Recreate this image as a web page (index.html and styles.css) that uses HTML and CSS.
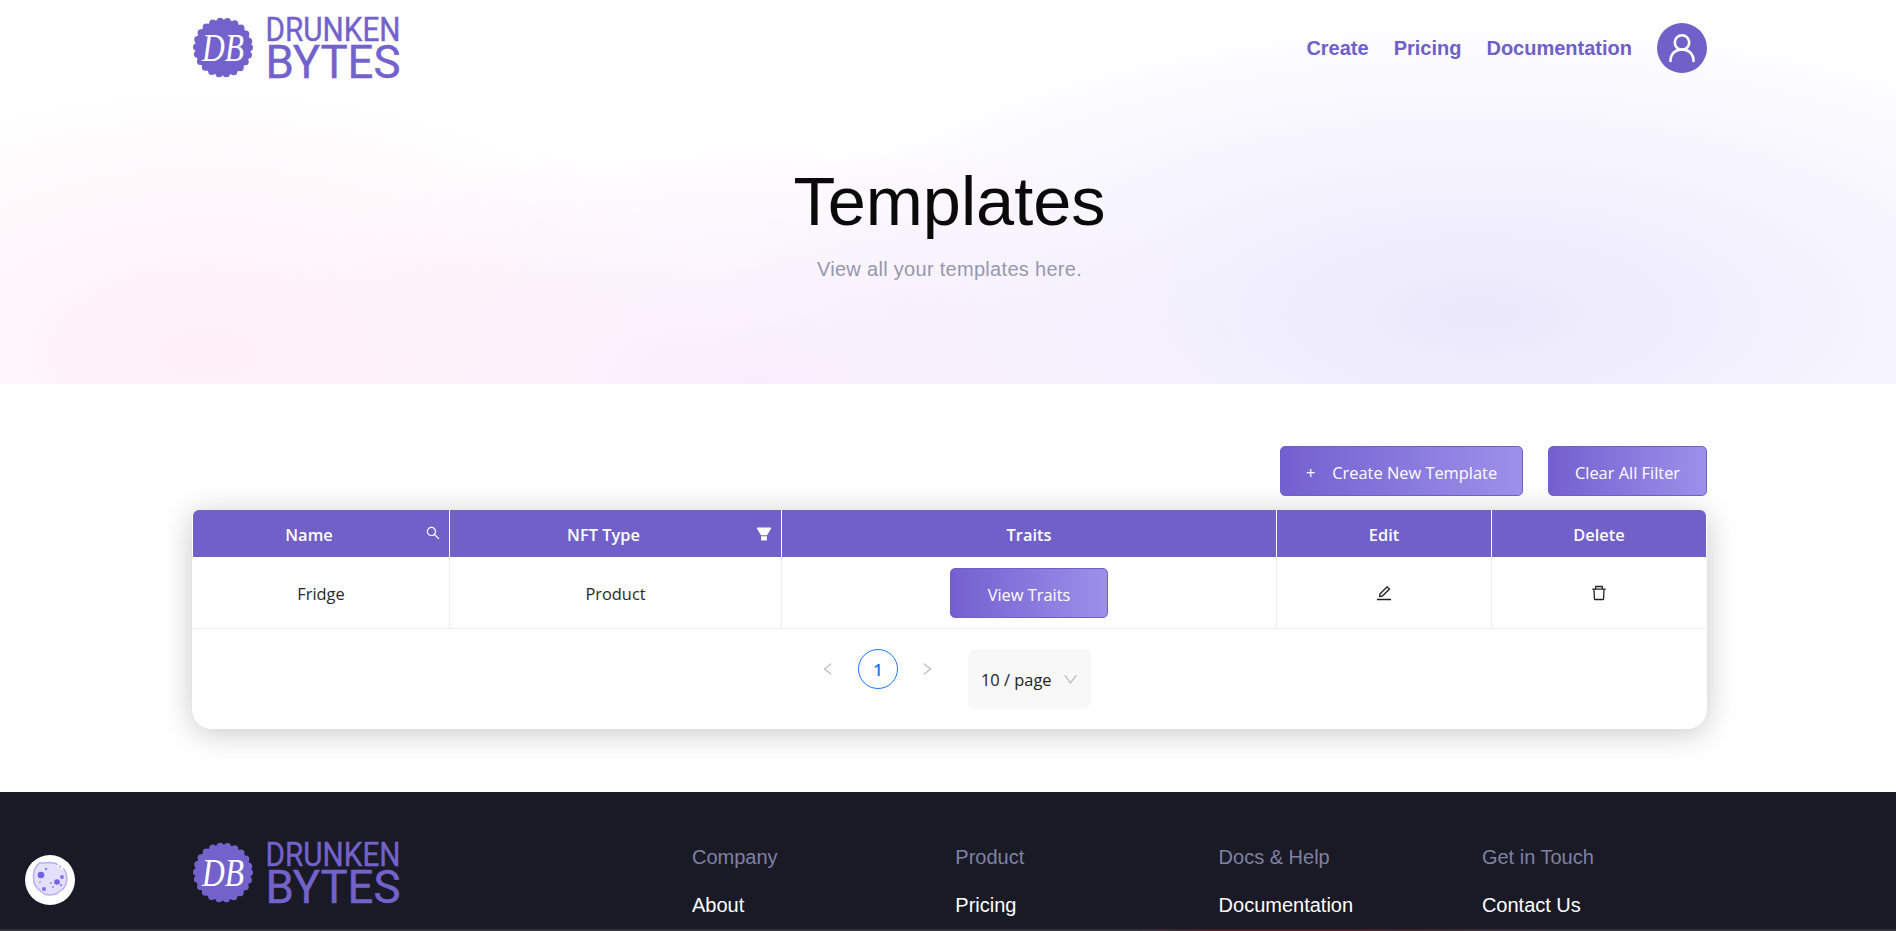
FILE: index.html
```html
<!DOCTYPE html>
<html lang="en">
<head>
<meta charset="utf-8">
<title>Templates</title>
<link rel="stylesheet" href="styles.css">
</head>
<body>
<section class="hero">
  <div class="wrap">
    <header class="topbar">
      <svg class="logo" viewBox="0 0 208 65" width="208" height="65" aria-label="Drunken Bytes">
        <circle cx="31" cy="32.500" r="28" class="logo-disc"/>
        <circle cx="31" cy="32.500" r="26.500" class="logo-scallop"/>
        <text x="10" y="46" class="logo-mono" textLength="42" lengthAdjust="spacingAndGlyphs">DB</text>
        <text x="73.500" y="26" class="logo-top" textLength="135" lengthAdjust="spacingAndGlyphs">DRUNKEN</text>
        <text x="73.500" y="63" class="logo-bottom" textLength="135" lengthAdjust="spacingAndGlyphs">BYTES</text>
      </svg>
      <nav class="nav">
        <a href="#">Create</a>
        <a href="#">Pricing</a>
        <a href="#">Documentation</a>
        <span class="avatar">
          <svg viewBox="0 0 50 50" width="50" height="50"><circle cx="25" cy="19.500" r="7.200" fill="none" stroke="#fff" stroke-width="2.600"/><path d="M13.500 38c0-7.500 5-11.500 11.500-11.500S36.500 30.500 36.500 38" fill="none" stroke="#fff" stroke-width="2.600" stroke-linecap="round"/></svg>
        </span>
      </nav>
    </header>
    <div class="hero-copy">
      <h1>Templates</h1>
      <p>View all your templates here.</p>
    </div>
  </div>
</section>

<main class="wrap main">
  <div class="actions">
    <button class="btn btn-create"><span class="plus">+</span>Create New Template</button>
    <button class="btn btn-clear">Clear All Filter</button>
  </div>
  <div class="card">
    <table class="table">
      <colgroup>
        <col class="c-name"><col class="c-type"><col class="c-traits"><col class="c-edit"><col class="c-del">
      </colgroup>
      <thead>
        <tr>
          <th class="has-tool">Name
            <svg class="th-tool" viewBox="64 64 896 896" width="14" height="14"><path fill="#fff" d="M909.6 854.5L649.9 594.8C690.2 542.7 712 479 712 412.3c0-79.8-31.2-154.7-87.6-211.1-56.4-56.4-131.4-87.6-211.1-87.6s-154.8 31.3-211.1 87.6c-56.4 56.3-87.6 131.3-87.6 211.1 0 79.7 31.2 154.7 87.6 211 56.4 56.4 131.3 87.7 211.1 87.7 66.7 0 130.3-21.8 182.4-62l259.7 259.6a8.2 8.2 0 0 0 11.6 0l43.6-43.5a8.2 8.2 0 0 0 0-11.6zM570.4 570.4C528 612.7 471.8 636 412 636s-116-23.3-158.4-65.6C211.3 528 188 471.8 188 412s23.3-116.1 65.6-158.4C296 211.3 352.2 188 412 188s116.1 23.2 158.4 65.6S636 352.2 636 412s-23.3 116.1-65.6 158.4z"/></svg>
          </th>
          <th class="has-tool">NFT Type
            <svg class="th-tool" viewBox="64 64 896 896" width="16" height="16"><path fill="#fff" d="M349 838c0 17.700 14.200 32 31.800 32h262.400c17.600 0 31.800-14.300 31.800-32V642H349v196zm531.100-684H143.900c-24.500 0-39.800 26.700-27.500 48l221.300 376h348.800l221.300-376c12.100-21.300-3.200-48-27.700-48z"/></svg>
          </th>
          <th>Traits</th>
          <th>Edit</th>
          <th>Delete</th>
        </tr>
      </thead>
      <tbody>
        <tr>
          <td>Fridge</td>
          <td>Product</td>
          <td><button class="btn btn-traits">View Traits</button></td>
          <td><svg class="cell-icon" viewBox="64 64 896 896" width="16" height="16"><path fill="#222" d="M257.7 752c2 0 4-.2 6-.5L431.900 722c2-.4 3.900-1.300 5.300-2.800l423.900-423.900a9.960 9.960 0 0 0 0-14.100L694.900 114.900c-1.900-1.900-4.400-2.900-7.100-2.900s-5.200 1-7.100 2.900L256.800 538.800c-1.500 1.500-2.400 3.300-2.800 5.300l-29.500 168.200a33.500 33.500 0 0 0 9.400 29.800c6.600 6.400 14.900 9.900 23.800 9.900zm67.400-174.400L687.800 215l73.300 73.300-362.700 362.600-88.900 15.700 15.600-89zM880 836H144c-17.700 0-32 14.300-32 32v36c0 4.400 3.600 8 8 8h784c4.400 0 8-3.600 8-8v-36c0-17.700-14.300-32-32-32z"/></svg></td>
          <td><svg class="cell-icon" viewBox="64 64 896 896" width="16" height="16"><path fill="#222" d="M360 184h-8c4.400 0 8-3.600 8-8v8h304v-8c0 4.400 3.600 8 8 8h-8v72h72v-80c0-35.300-28.700-64-64-64H352c-35.300 0-64 28.700-64 64v80h72v-72zm504 72H160c-17.700 0-32 14.300-32 32v32c0 4.400 3.600 8 8 8h60.400l24.700 523c1.600 34.100 29.800 61 63.900 61h454c34.200 0 62.300-26.800 63.900-61l24.700-523H888c4.400 0 8-3.600 8-8v-32c0-17.700-14.300-32-32-32zM731.300 840H292.700l-24.200-512h487l-24.200 512z"/></svg></td>
        </tr>
      </tbody>
    </table>
    <div class="pager">
      <span class="pg-arrow"><svg viewBox="64 64 896 896" width="14" height="14"><path fill="#bdbdbd" d="M724 218.300V141c0-6.700-7.700-10.400-12.900-6.300L260.300 486.800a31.860 31.860 0 0 0 0 50.300l450.800 352.100c5.300 4.100 12.900.4 12.900-6.300v-77.300c0-4.900-2.300-9.600-6.100-12.600l-360-281 360-281.100c3.800-3 6.100-7.700 6.100-12.600z"/></svg></span>
      <span class="pg-current">1</span>
      <span class="pg-arrow pg-next"><svg viewBox="64 64 896 896" width="14" height="14"><path fill="#bdbdbd" d="M765.700 486.800L314.900 134.700A7.970 7.970 0 0 0 302 141v77.300c0 4.900 2.300 9.600 6.100 12.600l360 281.100-360 281.100c-3.900 3-6.100 7.700-6.100 12.600V883c0 6.700 7.700 10.400 12.900 6.300l450.800-352.100a31.960 31.960 0 0 0 0-50.400z"/></svg></span>
      <span class="pg-size"><span class="pg-size-label">10 / page</span>
        <svg viewBox="64 64 896 896" width="15" height="15"><path fill="#bdbdbd" d="M884 256h-75c-5.100 0-9.900 2.500-12.900 6.600L512 654.200 227.900 262.600c-3-4.100-7.800-6.600-12.900-6.600h-75c-6.500 0-10.300 7.400-6.500 12.700l352.600 486.100c12.800 17.600 39 17.600 51.700 0l352.600-486.100c3.900-5.300.1-12.700-6.400-12.700z"/></svg>
      </span>
    </div>
  </div>
</main>

<footer class="footer">
  <div class="wrap footer-inner">
    <svg class="logo" viewBox="0 0 208 65" width="208" height="65" aria-label="Drunken Bytes">
      <circle cx="31" cy="32.500" r="28" class="logo-disc"/>
      <circle cx="31" cy="32.500" r="26.500" class="logo-scallop"/>
      <text x="10" y="46" class="logo-mono" textLength="42" lengthAdjust="spacingAndGlyphs">DB</text>
      <text x="73.500" y="26" class="logo-top" textLength="135" lengthAdjust="spacingAndGlyphs">DRUNKEN</text>
      <text x="73.500" y="63" class="logo-bottom" textLength="135" lengthAdjust="spacingAndGlyphs">BYTES</text>
    </svg>
    <div class="foot-cols">
      <div class="foot-col"><h4>Company</h4><a href="#">About</a></div>
      <div class="foot-col"><h4>Product</h4><a href="#">Pricing</a></div>
      <div class="foot-col"><h4>Docs &amp; Help</h4><a href="#">Documentation</a></div>
      <div class="foot-col"><h4>Get in Touch</h4><a href="#">Contact Us</a></div>
    </div>
  </div>
  <div class="foot-line"></div>
</footer>

<button class="cookie" aria-label="Cookie settings">
  <svg viewBox="0 0 50 50" width="50" height="50">
    <circle cx="25" cy="25" r="25" fill="#fff"/>
    <path d="M18 8l7-.5 6 1 4 3 3.500 2 2.500 4.500 1 6-1 5-2.500 4.500-4 3-3.500 2.500-5.500 1-5-.5-4.500-3-4-3.500-3-5-.5-6 .5-6 2.500-5 3-3z" fill="#e4dffa" stroke="#b9aef2" stroke-width="1.500"/>
    <circle cx="16" cy="20" r="3.300" fill="#6f63e6"/><circle cx="32" cy="27" r="2.800" fill="#6f63e6"/><circle cx="19" cy="34" r="2" fill="#7c70ea"/>
    <circle cx="37" cy="22" r="1.900" fill="#7c70ea"/><circle cx="21" cy="14" r="1.300" fill="#8f85ee"/><circle cx="36" cy="30" r="1.200" fill="#8f85ee"/>
    <circle cx="26" cy="28" r="1" fill="#8f85ee"/><circle cx="28" cy="32" r="1" fill="#8f85ee"/><circle cx="15" cy="27" r="1" fill="#a79ff2"/>
    <circle cx="37" cy="13" r="1.500" fill="#fff"/><circle cx="33" cy="11" r="1.200" fill="#fff"/>
  </svg>
</button>
</body>
</html>
```
FILE: styles.css
```css
* { box-sizing: border-box; }
html, body { margin: 0; height: 931px; overflow: hidden; }
body { background: #fff; font-family: "Liberation Sans", Arial, sans-serif; color: #111; }
.wrap { width: 1515px; margin-left: 192px; }

.hero {
  height: 384px;
  background:
    radial-gradient(ellipse 520px 280px at 11% 92%, rgba(255, 230, 242, .65), rgba(255, 230, 242, 0) 100%),
    radial-gradient(ellipse 520px 260px at 40% 100%, rgba(246, 230, 252, .7), rgba(246, 230, 252, 0) 100%),
    radial-gradient(ellipse 760px 310px at 78% 82%, rgba(234, 231, 252, .95), rgba(234, 231, 252, 0) 100%),
    #fff;
}
.topbar { display: flex; justify-content: space-between; align-items: flex-start; padding-top: 15px; }
.logo { display: block; flex: none; overflow: visible; }
.logo-disc { fill: #7462cc; }
.logo-scallop { fill: none; stroke: #7462cc; stroke-width: 7px; stroke-linecap: round; stroke-dasharray: 0 7.570; }
.logo-mono { font: italic 400 41px "Liberation Serif", serif; fill: #fff; }
.logo-top { font: 400 34px Roboto, sans-serif; fill: #7462cc; stroke: #7462cc; stroke-width: .4px; }
.logo-bottom { font: 400 46px Roboto, sans-serif; fill: #7462cc; stroke: #7462cc; stroke-width: .4px; }
.nav { display: flex; align-items: center; gap: 25px; margin-top: 8px; }
.nav a { color: #6f5fc8; font-weight: 700; font-size: 20px; text-decoration: none; }
.avatar { width: 50px; height: 50px; border-radius: 50%; background: #7160c8; display: block; }
.avatar svg { display: block; }
.hero-copy { text-align: center; padding-top: 83px; }
.hero-copy h1 { margin: 0; font-weight: 400; font-size: 68.500px; line-height: 77px; color: #0a0a0a; }
.hero-copy p { margin: 17px 0 0; font-size: 20px; letter-spacing: .3px; line-height: 24px; color: #9698ae; }

.main { padding-top: 62px; height: 408px; }
.actions { display: flex; justify-content: flex-end; gap: 25px; }
.btn {
  height: 50px; border: 1px solid #6f5fc8; border-radius: 5px; color: #fff;
  background: linear-gradient(90deg, #7360cf, #9d90ea);
  font: 400 16.400px "Open Sans", "Noto Sans", sans-serif; padding: 2px 0 0; cursor: pointer;
}
.btn-create { width: 243px; }
.btn-clear { width: 159px; }
.btn-traits { width: 158px; display: block; margin: 0 auto; }
.plus { margin-right: 17px; }

.card {
  margin-top: 14px; height: 219px; background: #fff; border-radius: 8px 8px 20px 20px;
  box-shadow: 0 4px 30px rgba(0, 0, 0, .22); padding: 0 1px;
}
.table { width: 1513px; table-layout: fixed; border-collapse: separate; border-spacing: 0; font: 400 16.400px "Open Sans", "Noto Sans", sans-serif; }
.c-name { width: 256px; }
.c-type { width: 332px; }
.c-traits { width: 495px; }
.c-edit { width: 215px; }
.c-del { width: 215px; }
.table th {
  height: 47px; background: #7160c8; color: #fff; font-weight: 600; text-align: center;
  position: relative; border-left: 1px solid #fff; padding: 2px 0 0;
}
.table th:first-child { border-left: 0; border-top-left-radius: 6px; }
.table th:last-child { border-top-right-radius: 6px; }
.has-tool { padding-right: 24px !important; }
.th-tool { position: absolute; right: 9px; top: 16px; }
.table td { height: 72px; text-align: center; padding: 1px 0 0; border-bottom: 1px solid #eee; border-left: 1px solid #eee; color: #2a2a2a; }
.table td:first-child { border-left: 0; }
.cell-icon { display: block; margin: 0 auto; }

.pager { display: flex; justify-content: center; align-items: flex-start; padding-top: 20px; font: 400 16.400px "Open Sans", "Noto Sans", sans-serif; }
.pg-arrow { width: 40px; height: 40px; margin-right: 9px; display: flex; align-items: center; justify-content: center; }
.pg-next { margin-right: 21px; }
.pg-current { width: 40px; height: 40px; margin-right: 9px; margin-left: 1px; padding-top: 1px; border: 1px solid #1677ff; border-radius: 50%; color: #1677ff; font-weight: 600; display: flex; align-items: center; justify-content: center; }
.pg-size { width: 123px; height: 60px; background: #f8f8f8; border-radius: 8px; display: flex; align-items: center; justify-content: space-between; padding: 1px 13px 0 13px; color: #222; }

.footer { height: 139px; background: #1a1a26; padding-top: 48px; position: relative; }
.footer-inner { display: flex; justify-content: space-between; }
.foot-cols { display: grid; grid-template-columns: repeat(4, 263.300px); width: 1015px; padding-top: 3px; }
.foot-col h4 { margin: 0; font-weight: 400; font-size: 20px; line-height: 28px; color: #7f81a3; }
.foot-col a { display: block; margin-top: 20px; font-size: 20px; line-height: 28px; color: #fff; text-decoration: none; }
.foot-line { position: absolute; left: 0; right: 0; bottom: 0; height: 2px; background: linear-gradient(90deg, #33333a 0 60%, #4a1f28 64%, #4a1f28 70%, #33333a 82%); }

.cookie { position: fixed; left: 25px; top: 855px; width: 50px; height: 50px; padding: 0; border: 0; background: none; }
.cookie svg { display: block; }
```
